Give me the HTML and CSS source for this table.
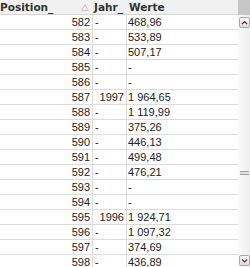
FILE: index.html
```html
<!DOCTYPE html>
<html>
<head>
<meta charset="utf-8">
<link rel="stylesheet" href="styles.css">
</head>
<body>
<div class="box">
  <div class="table">
    <div class="row head">
      <div class="c pos">Position_<span class="sort">
        <svg width="8" height="7" viewBox="0 0 8 7"><path d="M4 0.5 L7.5 6.5 L0.5 6.5 Z" fill="none" stroke="#c4c4c4" stroke-width="1"/></svg></span></div>
      <div class="c jahr">Jahr_</div>
      <div class="c werte">Werte</div>
    </div>
    <div class="row"><div class="c pos">582</div><div class="c jahr">-</div><div class="c werte">468,96</div></div>
    <div class="row"><div class="c pos">583</div><div class="c jahr">-</div><div class="c werte">533,89</div></div>
    <div class="row"><div class="c pos">584</div><div class="c jahr">-</div><div class="c werte">507,17</div></div>
    <div class="row"><div class="c pos">585</div><div class="c jahr">-</div><div class="c werte">-</div></div>
    <div class="row"><div class="c pos">586</div><div class="c jahr">-</div><div class="c werte">-</div></div>
    <div class="row"><div class="c pos">587</div><div class="c jahr num">1997</div><div class="c werte">1 964,65</div></div>
    <div class="row"><div class="c pos">588</div><div class="c jahr">-</div><div class="c werte">1 119,99</div></div>
    <div class="row"><div class="c pos">589</div><div class="c jahr">-</div><div class="c werte">375,26</div></div>
    <div class="row"><div class="c pos">590</div><div class="c jahr">-</div><div class="c werte">446,13</div></div>
    <div class="row"><div class="c pos">591</div><div class="c jahr">-</div><div class="c werte">499,48</div></div>
    <div class="row"><div class="c pos">592</div><div class="c jahr">-</div><div class="c werte">476,21</div></div>
    <div class="row"><div class="c pos">593</div><div class="c jahr">-</div><div class="c werte">-</div></div>
    <div class="row"><div class="c pos">594</div><div class="c jahr">-</div><div class="c werte">-</div></div>
    <div class="row"><div class="c pos">595</div><div class="c jahr num">1996</div><div class="c werte">1 924,71</div></div>
    <div class="row"><div class="c pos">596</div><div class="c jahr">-</div><div class="c werte">1 097,32</div></div>
    <div class="row"><div class="c pos">597</div><div class="c jahr">-</div><div class="c werte">374,69</div></div>
    <div class="row"><div class="c pos">598</div><div class="c jahr">-</div><div class="c werte">436,89</div></div>
  </div>
  <div class="scroll">
    <div class="scroll-head"></div>
    <div class="track">
      <div class="btn"><svg width="9" height="9" viewBox="0 0 9 9"><path d="M2 6 L4.5 3.5 L7 6" fill="none" stroke="#6a2a2a" stroke-width="1.2"/></svg></div>
      <div class="grip"></div>
      <div class="btn down"><svg width="9" height="9" viewBox="0 0 9 9"><path d="M2 3.5 L4.5 6 L7 3.5" fill="none" stroke="#6a2a2a" stroke-width="1.2"/></svg></div>
    </div>
  </div>
</div>
</body>
</html>
```
FILE: styles.css
```css
html, body {
  margin: 0;
  padding: 0;
  background: #ffffff;
}
.box {
  width: 250px;
  height: 267px;
  display: flex;
  overflow: hidden;
  font-family: "Liberation Sans", Arial, sans-serif;
  font-size: 11px;
  color: #222;
}
.table {
  width: 238px;
  display: flex;
  flex-direction: column;
}
.row {
  display: flex;
  height: 14px;
  border-bottom: 1px solid #dcdcdc;
  line-height: 14px;
  flex: none;
}
.row.head {
  background: #f1f1f1;
  font-family: "DejaVu Sans", Verdana, sans-serif;
  font-weight: bold;
  color: #333;
  font-size: 10.5px;
  border-bottom: 1px solid #d6d6d6;
}
.c {
  white-space: nowrap;
  overflow: hidden;
  box-sizing: border-box;
}
.pos {
  width: 93px;
  text-align: right;
  padding-right: 2px;
  border-right: 1px solid #dcdcdc;
}
.jahr {
  width: 34px;
  padding-left: 2px;
  border-right: 1px solid #dcdcdc;
}
.jahr.num {
  text-align: right;
  padding-right: 2px;
}
.werte {
  flex: 1;
  padding-left: 1px;
}
.head .pos {
  text-align: left;
  padding-left: 0;
  display: flex;
  justify-content: space-between;
  border-right: none;
  width: 93px;
}
.head .jahr {
  border-right: none;
  padding-left: 1px;
}
.head .werte {
  padding-left: 2px;
}
.sort {
  display: flex;
  align-items: center;
  padding-right: 2px;
}
.scroll {
  width: 12px;
  display: flex;
  flex-direction: column;
}
.scroll-head {
  height: 15px;
  background: #c6c6c6;
  flex: none;
}
.track {
  flex: 1;
  display: flex;
  flex-direction: column;
  align-items: center;
  background: linear-gradient(to right, #fafafa, #eeeeee);
  padding: 2px 0 1px 1px;
}
.btn {
  width: 9px;
  height: 9px;
  border: 1px solid #a8a8a8;
  border-radius: 2px;
  background: linear-gradient(#f8f8f8, #dcdcdc);
  display: flex;
  flex: none;
}
.btn.down {
  margin-top: auto;
}
.grip {
  width: 9px;
  height: 2px;
  margin-top: 143px;
  border-top: 1px solid #a0a0a0;
  border-bottom: 1px solid #a0a0a0;
  background: #e0e0e0;
  flex: none;
}
```
